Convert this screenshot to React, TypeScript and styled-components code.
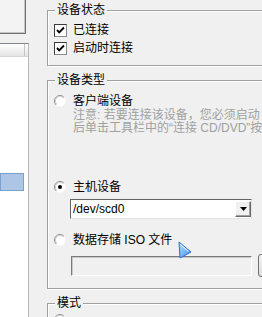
import styled, { createGlobalStyle } from "styled-components";

const GlobalStyle = createGlobalStyle`
  body {
    margin: 0;
    background: #f0f0f0;
  }
`;

const FONT = `"Liberation Sans", "Noto Sans CJK SC", sans-serif`;

function App() {
  return (
    <>
      <GlobalStyle />
      <Screen>
        <Sidebar>
          <SideButton />
          <DeviceList>
            <ListHeader>
              <HeaderCell />
            </ListHeader>
            <SelectedRow />
          </DeviceList>
        </Sidebar>

        <Panel>
          <TopRule />

          <Group $top={0} $pt={4} $pb={8}>
            <Legend>设备状态</Legend>
            <CheckRow>
              <CheckBox checked />
              已连接
            </CheckRow>
            <CheckRow>
              <CheckBox checked />
              启动时连接
            </CheckRow>
          </Group>

          <Group $top={7} $pt={6} $pb={11}>
            <Legend>设备类型</Legend>
            <RadioRow>
              <Radio />
              客户端设备
            </RadioRow>
            <Note>
              注意: 若要连接该设备，您必须启动
              <br />
              后单击工具栏中的“连接 CD/DVD”按钮
            </Note>
            <RadioRow $mt={44}>
              <Radio checked />
              主机设备
            </RadioRow>
            <Combo>
              <ComboText>/dev/scd0</ComboText>
              <DropButton>
                <svg width="7" height="4" viewBox="0 0 7 4">
                  <polygon points="0,0 7,0 3.5,4" fill="#000" />
                </svg>
              </DropButton>
            </Combo>
            <RadioRow $mt={13}>
              <Radio />
              数据存储 ISO 文件
            </RadioRow>
            <FileRow>
              <FileField />
              <BrowseButton />
            </FileRow>
          </Group>

          <Group $top={7} $pt={2} $pb={4}>
            <Legend>模式</Legend>
            <RadioRow>
              <Radio />
            </RadioRow>
          </Group>
        </Panel>

        <Pointer width="18" height="24" viewBox="0 0 18 24">
          <defs>
            <linearGradient id="ptr" x1="0" y1="0" x2="1" y2="1">
              <stop offset="0" stopColor="#b9e2ff" />
              <stop offset="1" stopColor="#3d8fe6" />
            </linearGradient>
          </defs>
          <polygon
            points="3,4 15,14 4,20"
            fill="url(#ptr)"
            stroke="#2a6fd6"
            strokeWidth="1"
            strokeLinejoin="round"
          />
          <polyline points="4.5,6.5 12.5,13.5" stroke="#fff" strokeWidth="1" fill="none" />
        </Pointer>
      </Screen>
    </>
  );
}

export default App;

function CheckBox({ checked }: { checked?: boolean }) {
  return (
    <Box>
      {checked && (
        <svg width="11" height="11" viewBox="0 0 11 11">
          <path d="M2 5 L4.2 7.3 L9 2.5" stroke="#000" strokeWidth="1.9" fill="none" />
        </svg>
      )}
    </Box>
  );
}

function Radio({ checked }: { checked?: boolean }) {
  return (
    <RadioIcon width="12" height="12" viewBox="0 0 12 12">
      <circle cx="6" cy="6" r="5.5" fill="#fff" />
      <path d="M2.1 9.9 A5.5 5.5 0 0 1 9.9 2.1" stroke="#8d8d8d" fill="none" />
      <path d="M2.8 9.2 A4.5 4.5 0 0 1 9.2 2.8" stroke="#cfcfcf" fill="none" />
      {checked && <circle cx="6" cy="6" r="2" fill="#000" />}
    </RadioIcon>
  );
}

const Screen = styled.div`
  position: relative;
  width: 262px;
  height: 317px;
  overflow: hidden;
  display: flex;
  background: #f0f0f0;
  font-family: ${FONT};
  font-size: 12px;
  color: #000;
`;

const Sidebar = styled.div`
  flex: none;
  width: 47px;
  display: flex;
  flex-direction: column;
`;

const SideButton = styled.div`
  width: 26px;
  height: 34px;
  box-sizing: border-box;
  background: #f3f3f3;
  border-right: 1px solid #707070;
  border-bottom: 1px solid #707070;
  box-shadow: inset -1px -1px 0 #c6c6c6;
`;

const DeviceList = styled.div`
  margin-top: 9px;
  width: 29px;
  flex: 1;
  box-sizing: border-box;
  background: #fff;
  border-top: 1px solid #828790;
  border-right: 1px solid #b8b8b8;
  display: flex;
  flex-direction: column;
`;

const ListHeader = styled.div`
  height: 12px;
  background: linear-gradient(#ffffff, #f3f3f3 50%, #e4e4e4);
  border-bottom: 1px solid #d5d5d5;
`;

const HeaderCell = styled.div`
  width: 25px;
  height: 100%;
  box-sizing: border-box;
  border-right: 1px solid #c4c4c4;
`;

const SelectedRow = styled.div`
  margin-top: 116px;
  width: 24px;
  height: 18px;
  box-sizing: border-box;
  background: #adc6e6;
  border: 1px solid #7aa0cf;
`;

const Panel = styled.div`
  flex: none;
  width: 250px;
  display: flex;
  flex-direction: column;
`;

const TopRule = styled.div`
  margin: 2px 0 1px;
  height: 1px;
  background: #fbfbfb;
`;

const Group = styled.fieldset<{ $top: number; $pt: number; $pb: number }>`
  margin: ${({ $top }) => $top}px 0 0;
  padding: ${({ $pt }) => $pt}px 0 ${({ $pb }) => $pb}px;
  min-width: 0;
  border: 1px solid #a0a0a0;
  box-shadow: inset 1px 1px 0 #fff, 1px 1px 0 #fff;
  display: flex;
  flex-direction: column;
`;

const Legend = styled.legend`
  margin-left: 7px;
  padding: 0 2px;
  line-height: 14px;
  background: #f0f0f0;
`;

const CheckRow = styled.label`
  display: flex;
  align-items: center;
  gap: 6px;
  height: 18px;
  padding-left: 6px;
  line-height: 18px;
  white-space: nowrap;
`;

const Box = styled.span`
  flex: none;
  width: 13px;
  height: 13px;
  box-sizing: border-box;
  background: #fff;
  border: 1px solid;
  border-color: #3a3a3a #8a8a8a #8a8a8a #3a3a3a;
  display: flex;
`;

const RadioRow = styled.label<{ $mt?: number }>`
  display: flex;
  align-items: center;
  gap: 7px;
  height: 16px;
  margin-top: ${({ $mt }) => $mt ?? 0}px;
  padding-left: 6px;
  line-height: 16px;
  white-space: nowrap;
`;

const RadioIcon = styled.svg`
  flex: none;
  display: block;
`;

const Note = styled.div`
  padding-left: 25px;
  line-height: 13px;
  color: #a0a0a0;
  white-space: nowrap;
`;

const Combo = styled.div`
  margin: 4px 0 0 22px;
  width: 182px;
  height: 20px;
  box-sizing: border-box;
  display: flex;
  align-items: center;
  background: #fff;
  border: 1px solid;
  border-color: #646464 #e3e3e3 #e3e3e3 #646464;
`;

const ComboText = styled.span`
  flex: 1;
  padding-left: 2px;
  line-height: 16px;
`;

const DropButton = styled.div`
  width: 16px;
  height: 16px;
  box-sizing: border-box;
  display: flex;
  align-items: center;
  justify-content: center;
  background: #f0f0f0;
  border: 1px solid;
  border-color: #ffffff #696969 #696969 #ffffff;
  box-shadow: inset -1px -1px 0 #a0a0a0;
`;

const FileRow = styled.div`
  display: flex;
  align-items: center;
  gap: 6px;
  height: 23px;
  margin-top: 6px;
  padding-left: 23px;
`;

const FileField = styled.div`
  flex: none;
  width: 181px;
  height: 20px;
  box-sizing: border-box;
  background: #f0f0f0;
  border: 1px solid;
  border-color: #7a7a7a #ffffff #ffffff #7a7a7a;
  box-shadow: inset 1px 1px 0 #c8c8c8;
`;

const BrowseButton = styled.div`
  flex: none;
  width: 60px;
  height: 23px;
  box-sizing: border-box;
  border: 1px solid #707070;
  border-radius: 3px;
  background: linear-gradient(#f2f2f2, #dddddd);
`;

const Pointer = styled.svg`
  position: absolute;
  left: 176px;
  top: 238px;
`;
